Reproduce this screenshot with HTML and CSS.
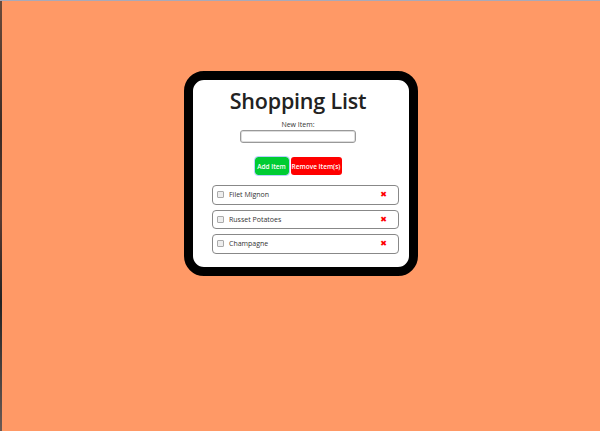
FILE: index.html
```html
<!DOCTYPE html>
<html>
<head>
<meta charset="utf-8">
<link rel="stylesheet" href="styles.css">
</head>
<body>
<div class="edge"></div>
<main class="page">
  <section class="card">
    <div class="top">
      <h1 class="title">Shopping List</h1>
      <label class="label" for="item">New Item:</label>
      <input class="field" id="item" type="text">
      <div class="buttons">
        <button class="btn btn-add">Add Item</button>
        <button class="btn btn-remove">Remove Item(s)</button>
      </div>
    </div>
    <ul class="list">
      <li class="row"><input class="check" type="checkbox"><span class="name">Filet Mignon</span><span class="x">&#10006;</span></li>
      <li class="row"><input class="check" type="checkbox"><span class="name">Russet Potatoes</span><span class="x">&#10006;</span></li>
      <li class="row"><input class="check" type="checkbox"><span class="name">Champagne</span><span class="x">&#10006;</span></li>
    </ul>
  </section>
</main>
</body>
</html>
```
FILE: styles.css
```css
html, body {
  margin: 0;
  height: 100%;
}
body {
  background: #ff9966;
  font-family: "Open Sans", "Liberation Sans", sans-serif;
  color: #222;
  display: flex;
  border-top: 1px solid #a9a9b8;
  box-sizing: border-box;
}
.edge {
  width: 2px;
  flex: none;
  background: linear-gradient(#6b4a3a, #3a2a24 30%, #5a3a30 50%, #222 70%, #6a5a55);
}
.page {
  flex: 1;
  display: flex;
  justify-content: center;
  align-items: flex-start;
  padding-top: 70px;
}
.card {
  width: 234px;
  box-sizing: border-box;
  background: #fff;
  border: 9px solid #000;
  border-radius: 20px;
  padding: 8px 10px 13px;
  display: flex;
  flex-direction: column;
  align-items: center;
}
.top {
  align-self: stretch;
  margin-right: 6px;
  display: flex;
  flex-direction: column;
  align-items: center;
}
.title {
  margin: 0;
  font-size: 21.5px;
  font-weight: 600;
  line-height: 25px;
  color: #222;
  letter-spacing: -0.2px;
}
.label {
  font-size: 7px;
  margin-top: 7px;
  line-height: 9px;
  color: #333;
}
.field {
  width: 116px;
  height: 13px;
  box-sizing: border-box;
  border: 1px solid #999;
  border-radius: 3px;
  margin: 1px 0 0;
  padding: 0;
  box-shadow: inset 0 0 0 1px #ddd;
}
.buttons {
  display: flex;
  gap: 2px;
  margin-top: 14px;
}
.btn {
  border: none;
  border-radius: 3px;
  color: #fff;
  font-family: "Open Sans", "Liberation Sans", sans-serif;
  font-size: 6.5px;
  font-weight: 600;
  height: 18px;
  padding: 0;
}
.btn-add {
  background: #00cc33;
  width: 34px;
  outline: 1px solid #b8d0ff;
}
.btn-remove {
  background: #ff0000;
  width: 51px;
}
.list {
  list-style: none;
  margin: 10px 0 0 9px;
  padding: 0;
  display: flex;
  flex-direction: column;
  gap: 5px;
  width: 187px;
}
.row {
  height: 19.5px;
  box-sizing: border-box;
  border: 1.5px solid #888;
  border-radius: 4px;
  display: flex;
  align-items: center;
  padding: 0 11px 0 4px;
  font-size: 7px;
  color: #333;
}
.check {
  appearance: none;
  width: 7px;
  height: 7px;
  box-sizing: border-box;
  border: 1px solid #aaa;
  border-radius: 1px;
  background: #eee;
  margin: 0 5px 0 0;
}
.name {
  flex: 1;
}
.x {
  color: #ff0000;
  font-size: 8px;
  font-family: "DejaVu Sans", sans-serif;
}
```
